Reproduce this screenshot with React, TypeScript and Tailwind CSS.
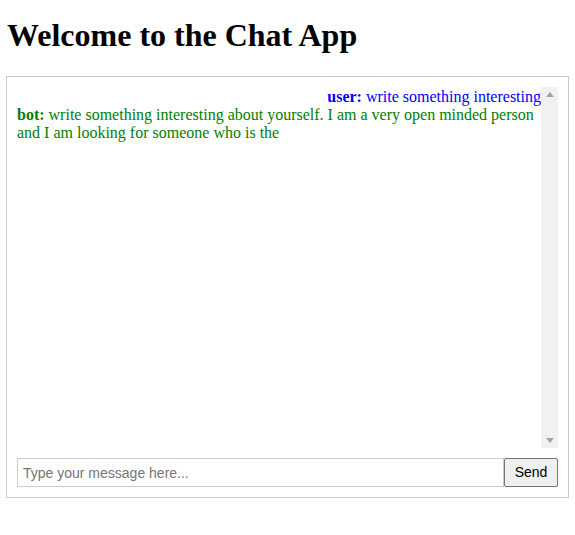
export default function App() {
  const messages = [
    { sender: "user", text: "write something interesting" },
    {
      sender: "bot",
      text: "write something interesting about yourself. I am a very open minded person and I am looking for someone who is the",
    },
  ];

  return (
    <div className="min-h-screen bg-white px-[6px] pt-[17px] font-['Liberation_Serif',serif] text-black">
      <h1 className="mb-[22px] pl-[1px] text-[32px] font-bold leading-[37px]">
        Welcome to the Chat App
      </h1>

      {/* CHAT BOX */}
      <div className="w-[563px] border border-[#cccccc] p-[10px]">
        <div className="flex h-[361px]">
          <div className="flex-1 overflow-hidden pt-[1px]">
            {messages.map((m, i) => (
              <div
                key={i}
                className={`text-[16px] leading-[18px] ${
                  m.sender === "user"
                    ? "text-right text-[#0000ff]"
                    : "text-left text-[#008000]"
                }`}
              >
                <b>{m.sender}:</b> {m.text}
              </div>
            ))}
          </div>
          {/* scrollbar */}
          <div className="flex w-[17px] flex-col items-center justify-between bg-[#f1f1f1] py-[5px]">
            <svg width="8" height="5" viewBox="0 0 8 5">
              <path d="M0 5 L4 0 L8 5 Z" fill="#a3a3a3" />
            </svg>
            <svg width="8" height="5" viewBox="0 0 8 5">
              <path d="M0 0 L4 5 L8 0 Z" fill="#a3a3a3" />
            </svg>
          </div>
        </div>

        {/* INPUT ROW */}
        <div className="mt-[10px] flex font-['Liberation_Sans',Arial,sans-serif] text-[14px]">
          <input
            type="text"
            placeholder="Type your message here..."
            className="h-[29px] flex-1 border border-[#cccccc] px-[5px] text-black outline-none placeholder:text-[#757575]"
          />
          <button className="h-[29px] w-[54px] rounded-[2px] border border-[#767676] bg-[#efefef] text-black">
            Send
          </button>
        </div>
      </div>
    </div>
  );
}
